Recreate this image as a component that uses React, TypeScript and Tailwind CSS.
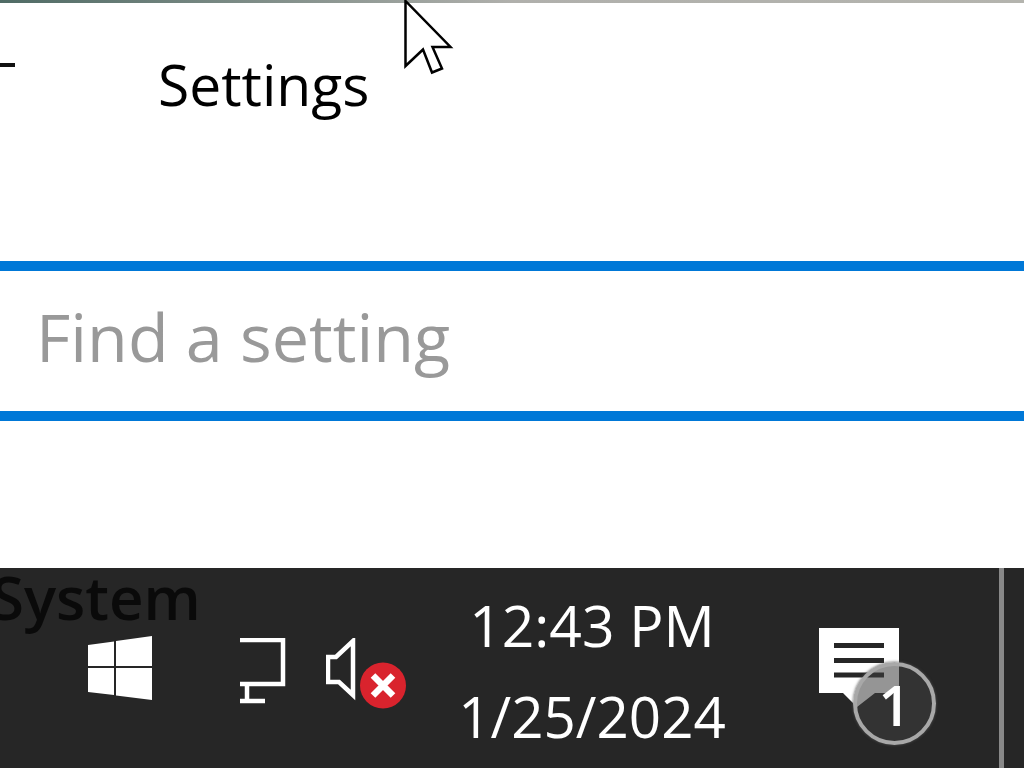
const font = "font-['Open_Sans','Noto_Sans',sans-serif]";

function Cursor() {
  return (
    <svg className="absolute left-[403px] top-0" width="52" height="76" viewBox="0 0 52 76">
      <path d="M2.5 1 L2.5 66 L20 49.5 L29 72.5 L39 68.5 L29.5 47 L47.5 47 Z" fill="#fff" stroke="#000" strokeWidth="2.5" strokeLinejoin="miter" />
    </svg>
  );
}

function WindowsLogo() {
  return (
    <svg width="64" height="64" viewBox="0 0 64 64" fill="#fff" className="mt-[68px] ml-[88px] shrink-0">
      <path d="M0 9 L26 5.5 L26 30 L0 30 Z" />
      <path d="M28 5 L64 0 L64 30 L28 30 Z" />
      <path d="M0 32 L26 32 L26 59 L0 56 Z" />
      <path d="M28 32 L64 32 L64 64 L28 59.5 Z" />
    </svg>
  );
}

function NetworkIcon() {
  return (
    <svg width="46" height="66" viewBox="0 0 46 66" fill="none" stroke="#fff" strokeWidth="4.5" className="mt-[70px] ml-[88px] shrink-0">
      <path d="M0 2 H43 V46 H0" />
      <path d="M7 46 V63" />
      <path d="M0 63 H25" />
    </svg>
  );
}

function VolumeIcon() {
  return (
    <svg width="80" height="72" viewBox="0 0 80 72" className="mt-[70px] ml-[40px] shrink-0">
      <path d="M27 3 V57 L13 44 H2 V19 H10 Z" fill="none" stroke="#fff" strokeWidth="4.5" />
      <circle cx="57" cy="47.5" r="23" fill="#d9232d" />
      <path d="M47 37.5 L67 57.5 M67 37.5 L47 57.5" stroke="#fff" strokeWidth="6.5" strokeLinecap="butt" />
    </svg>
  );
}

function Clock() {
  return (
    <div className={`mt-[22px] w-[372px] shrink-0 text-center text-white ${font}`}>
      <div className="text-[57px] leading-[70px]">12:43 PM</div>
      <div className="mt-[22px] text-[56.5px] leading-[70px]">1/25/2024</div>
    </div>
  );
}

function Notifications() {
  return (
    <div className="relative mt-[60px] ml-[41px] h-[120px] w-[80px] shrink-0">
      <svg width="80" height="80" viewBox="0 0 80 80">
        <path d="M0 0 H80 V65 H56 L38 79 L24 65 H0 Z" fill="#fff" />
        <path d="M15 17.5 H65 M15 32.5 H65 M15 47 H65" stroke="#262626" strokeWidth="5" />
      </svg>
      <div className={`absolute left-[34px] top-[34px] flex h-[83px] w-[83px] items-center justify-center rounded-full border-4 border-[#a8a8a8] bg-[#3e3e3e]/55 text-[56px] font-semibold text-white shadow-[0_0_3px_#555] ${font}`}>
        1
      </div>
    </div>
  );
}

export default function App() {
  return (
    <div className="relative flex h-[768px] w-[1024px] flex-col overflow-hidden bg-white">
      <div className="h-[3px] bg-linear-to-r from-[#4f6b65] via-[#b0b0ac] to-[#b4b4ae]" />

      <div className="flex h-[258px] items-start">
        <div className="mt-[60px] h-[4px] w-[15px] bg-[#111]" />
        <h1 className={`ml-[143px] mt-[41px] text-[57px] leading-[80px] text-black ${font}`}>Settings</h1>
      </div>

      <div className="flex h-[160px] items-center border-y-[10px] border-[#0078d7] pl-[36px]">
        <span className={`-mt-[10px] text-[66.5px] leading-none text-[#999] ${font}`}>Find a setting</span>
      </div>

      <div className="h-[147px]" />

      <div className="relative flex h-[200px] bg-[#262626]">
        <span className={`absolute left-[-9px] top-[-11px] text-[60px] font-semibold leading-[80px] text-[#0a0a0a] ${font}`}>System</span>
        <WindowsLogo />
        <NetworkIcon />
        <VolumeIcon />
        <Clock />
        <Notifications />
        <div className="ml-[100px] h-full w-[5px] shrink-0 bg-[#888]" />
      </div>

      <Cursor />
    </div>
  );
}
